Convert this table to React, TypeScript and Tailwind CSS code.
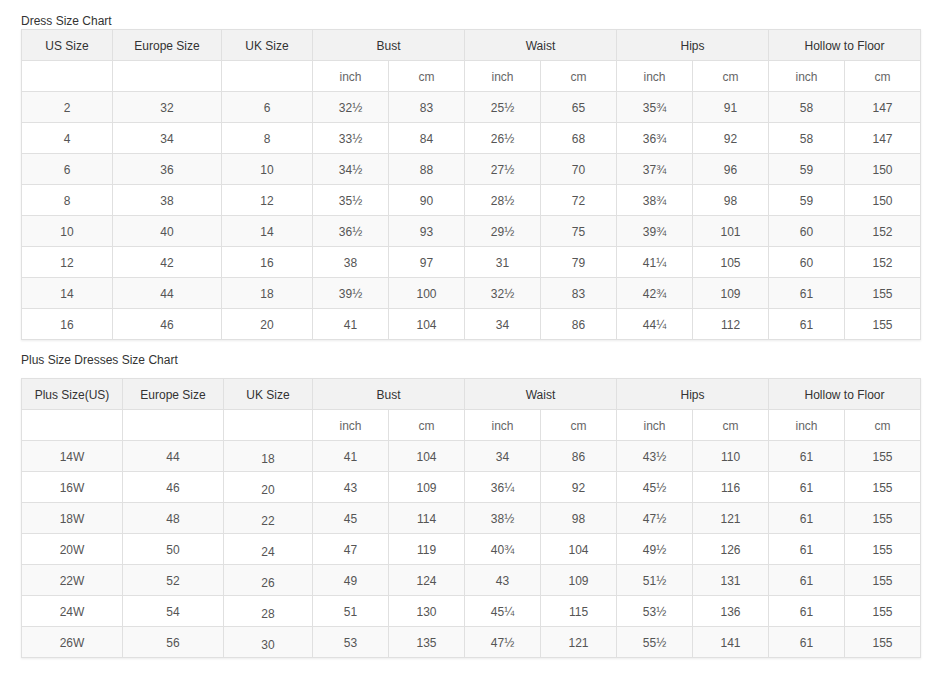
import React from "react";

const t1 = [
  ["2", "32", "6", "32½", "83", "25½", "65", "35¾", "91", "58", "147"],
  ["4", "34", "8", "33½", "84", "26½", "68", "36¾", "92", "58", "147"],
  ["6", "36", "10", "34½", "88", "27½", "70", "37¾", "96", "59", "150"],
  ["8", "38", "12", "35½", "90", "28½", "72", "38¾", "98", "59", "150"],
  ["10", "40", "14", "36½", "93", "29½", "75", "39¾", "101", "60", "152"],
  ["12", "42", "16", "38", "97", "31", "79", "41¼", "105", "60", "152"],
  ["14", "44", "18", "39½", "100", "32½", "83", "42¾", "109", "61", "155"],
  ["16", "46", "20", "41", "104", "34", "86", "44¼", "112", "61", "155"],
];

const t2 = [
  ["14W", "44", "18", "41", "104", "34", "86", "43½", "110", "61", "155"],
  ["16W", "46", "20", "43", "109", "36¼", "92", "45½", "116", "61", "155"],
  ["18W", "48", "22", "45", "114", "38½", "98", "47½", "121", "61", "155"],
  ["20W", "50", "24", "47", "119", "40¾", "104", "49½", "126", "61", "155"],
  ["22W", "52", "26", "49", "124", "43", "109", "51½", "131", "61", "155"],
  ["24W", "54", "28", "51", "130", "45¼", "115", "53½", "136", "61", "155"],
  ["26W", "56", "30", "53", "135", "47½", "121", "55½", "141", "61", "155"],
];

function SizeTable({
  first,
  widths,
  rows,
  ukShift,
}: {
  first: string;
  widths: number[];
  rows: string[][];
  ukShift?: boolean;
}) {
  const cell = "border border-[#e0e0e0] h-[31px] p-0 text-center align-middle";
  const T = ({ v, shift }: { v: string; shift?: boolean }) => (
    <span className={shift ? "relative top-[3px]" : "relative top-[1px]"}>{v}</span>
  );
  return (
    <table className="table-fixed w-[900px] border-collapse shadow-[0_1px_2px_rgba(0,0,0,0.08)]">
      <colgroup>
        {widths.map((w, i) => (
          <col key={i} style={{ width: w }} />
        ))}
        {Array.from({ length: 8 }).map((_, i) => (
          <col key={"c" + i} style={{ width: 76 }} />
        ))}
      </colgroup>
      <tbody>
        <tr className="bg-[#f2f2f2] text-[#333]">
          <td className={cell}><T v={first} /></td>
          <td className={cell}><T v="Europe Size" /></td>
          <td className={cell}><T v="UK Size" /></td>
          <td className={cell} colSpan={2}><T v="Bust" /></td>
          <td className={cell} colSpan={2}><T v="Waist" /></td>
          <td className={cell} colSpan={2}><T v="Hips" /></td>
          <td className={cell} colSpan={2}><T v="Hollow to Floor" /></td>
        </tr>
        <tr className="bg-white text-[#666]">
          <td className={cell}></td>
          <td className={cell}></td>
          <td className={cell}></td>
          {Array.from({ length: 4 }).map((_, i) => (
            <React.Fragment key={i}>
              <td className={cell}><T v="inch" /></td>
              <td className={cell}><T v="cm" /></td>
            </React.Fragment>
          ))}
        </tr>
        {rows.map((r, ri) => (
          <tr key={ri} className={ri % 2 === 0 ? "bg-[#f9f9f9] text-[#555]" : "bg-white text-[#555]"}>
            {r.map((v, ci) => (
              <td key={ci} className={cell}>
                <T v={v} shift={ukShift && ci === 2} />
              </td>
            ))}
          </tr>
        ))}
      </tbody>
    </table>
  );
}

export default function App() {
  return (
    <div
      className="bg-white w-[946px] h-[681px] pl-[21px] text-[12px] leading-[14px]"
      style={{ fontFamily: '"Liberation Sans", Arial, sans-serif' }}
    >
      <div className="pt-[14px] pb-[1px] text-[#333]">Dress Size Chart</div>
      <SizeTable first="US Size" widths={[91, 109, 91]} rows={t1} />
      <div className="pt-[13px] pb-[11px] text-[#333]">Plus Size Dresses Size Chart</div>
      <SizeTable first="Plus Size(US)" widths={[101, 101, 89]} rows={t2} ukShift />
    </div>
  );
}
